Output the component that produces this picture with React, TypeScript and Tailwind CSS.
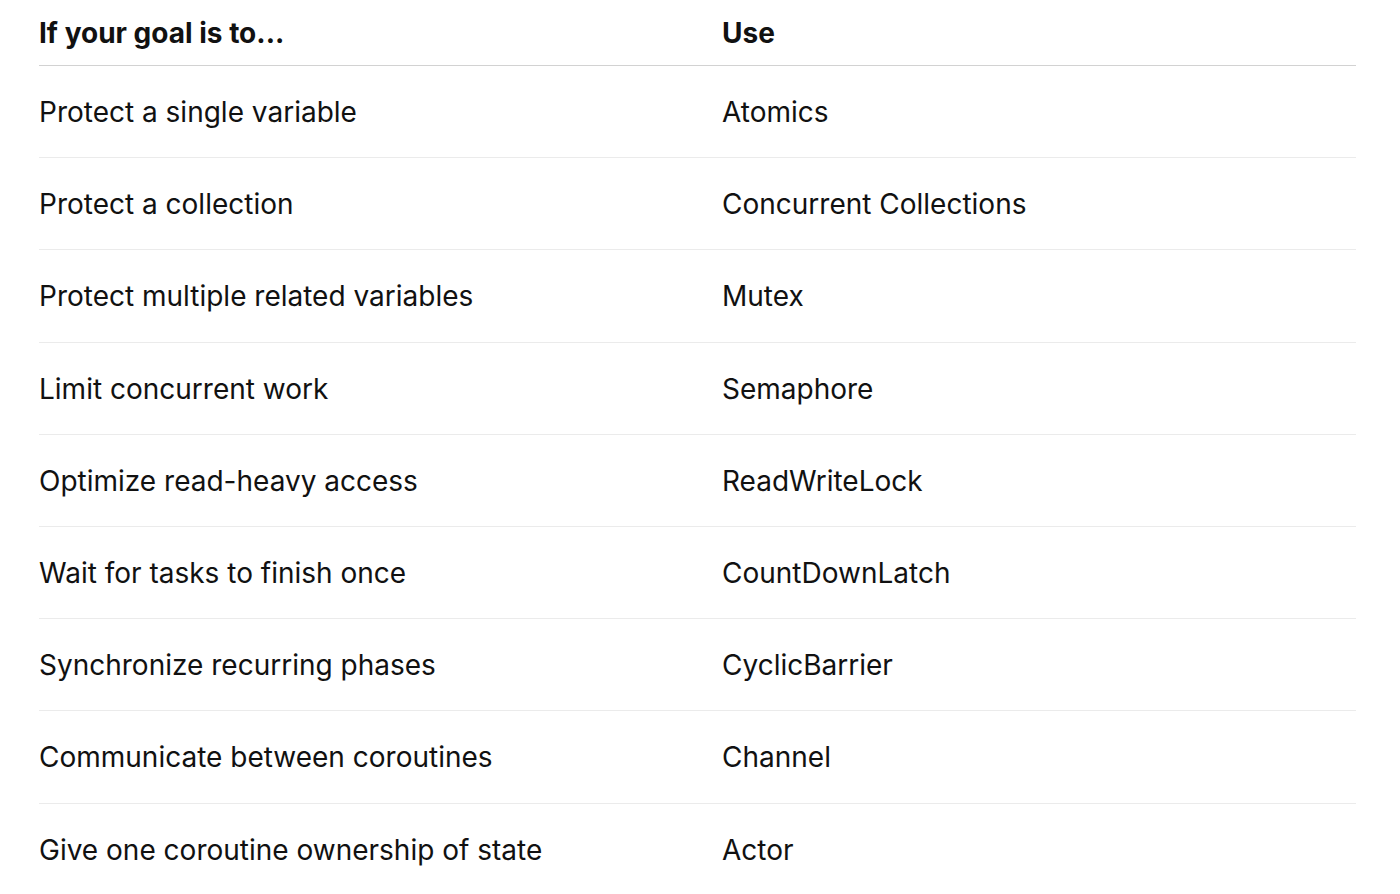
import React from 'react'

const rows = [
  ['Protect a single variable', 'Atomics'],
  ['Protect a collection', 'Concurrent Collections'],
  ['Protect multiple related variables', 'Mutex'],
  ['Limit concurrent work', 'Semaphore'],
  ['Optimize read-heavy access', 'ReadWriteLock'],
  ['Wait for tasks to finish once', 'CountDownLatch'],
  ['Synchronize recurring phases', 'CyclicBarrier'],
  ['Communicate between coroutines', 'Channel'],
  ['Give one coroutine ownership of state', 'Actor'],
]

export default function App() {
  return (
    <div className="min-h-screen bg-white px-[39px] text-[28px] text-[#111] font-['Inter',sans-serif]">
      <div className="w-[1317px]">
        <div className="flex h-[66px] items-center border-b border-[#d2d2d2] font-bold">
          <div className="w-[683px]">If your goal is to...</div>
          <div>Use</div>
        </div>
        {rows.map(([goal, use], i) => (
          <div
            key={goal}
            className={
              i < rows.length - 1
                ? 'flex h-[92.2px] items-center border-b border-[#ebebeb] pt-[1px]'
                : 'flex h-[92.2px] items-center pt-[1px]'
            }
          >
            <div className="w-[683px]">{goal}</div>
            <div>{use}</div>
          </div>
        ))}
      </div>
    </div>
  )
}
